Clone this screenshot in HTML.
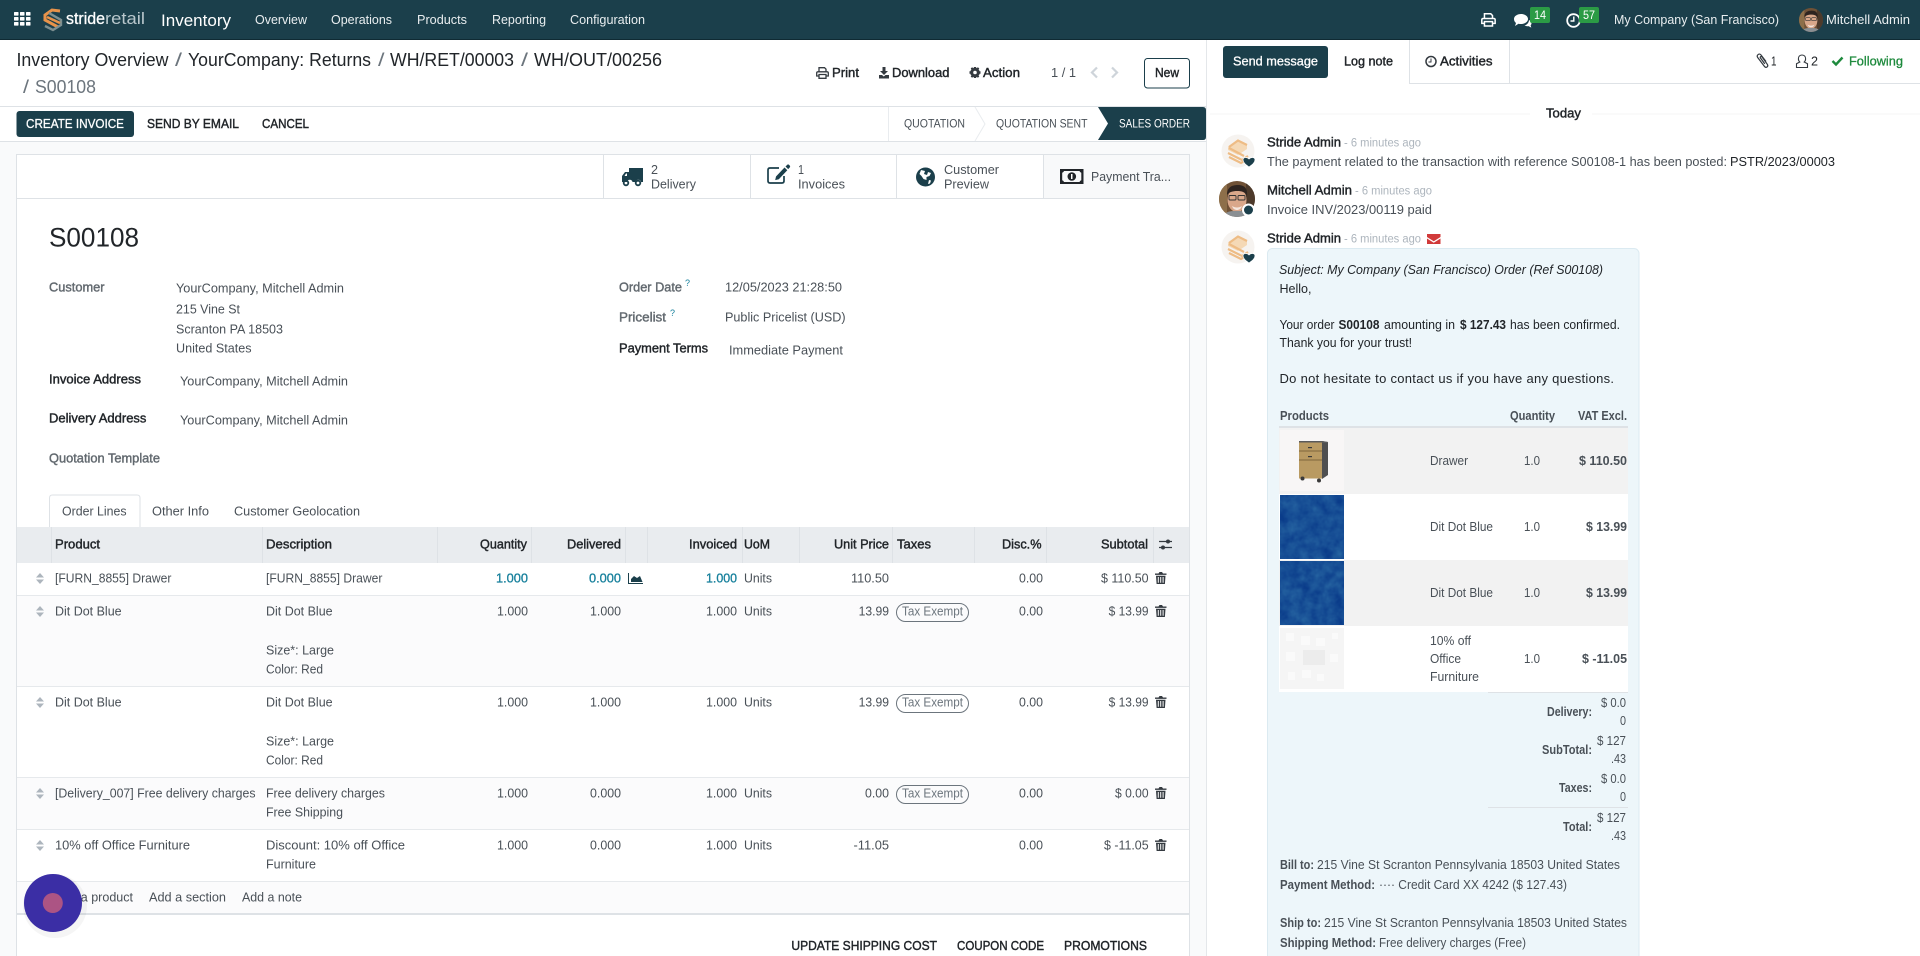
<!DOCTYPE html>
<html lang="en"><head><meta charset="utf-8"><title>S00108</title>
<style>
html,body{margin:0;padding:0;background:#fff;width:1920px;height:956px;overflow:hidden}
svg{display:block;font-family:"Liberation Sans",sans-serif;font-size:13px}
.d{fill:#212529}.g{fill:#495057}.l{fill:#6c757d}.w{fill:#fff}.s{fill:#adb5bd;font-size:11.5px}.t{fill:#17809c}
.dm{fill:#212529;stroke:#212529;stroke-width:.42}.gm{fill:#495057;stroke:#495057;stroke-width:.42}.lm{fill:#62696f;stroke:#62696f;stroke-width:.42}.wm{fill:#fff;stroke:#fff;stroke-width:.3}
.gb{fill:#495057;font-weight:bold}
.n{fill:#e9eef0}
.b{font-size:18.5px}.i{font-style:italic}
.tm{fill:#17809c;stroke:#17809c;stroke-width:.3}
</style></head><body>
<svg width="1920" height="956" viewBox="0 0 1920 956">
<defs>
<g id="handle"><path d="M0 4.500 4 0 8 4.500zM0 6.500h8L4 11z" fill="#adb5bd"/></g>
<g id="trash"><path d="M3.500 1.500 4.500 0h2.500l1 1.500h3.500v1.400H0V1.500zM1 3.700h9.500l-.6 8.300H1.600zM2.800 5v5.800h1V5zM5.200 5v5.800h1V5zM7.600 5v5.800h1V5z" fill="#343a40" fill-rule="evenodd"/></g>
<g id="pill"><rect x=".5" y=".5" width="72" height="18" rx="9" fill="none" stroke="#6c757d"/></g>
<g id="printer" fill="none" stroke="currentColor" stroke-width="1.300"><path d="M819 72v-4.300h5.500l1.500 1.500V72"/><path d="M819 76h-2.300v-3q0-1.200 1.200-1.200h9.200q1.200 0 1.200 1.200v3H826"/><path d="M819 74.500h7v3.800h-7z"/></g>
<clipPath id="cp1"><circle cx="18" cy="18" r="18"/></clipPath>
<g id="photo"><g clip-path="url(#cp1)"><rect width="36" height="36" fill="#6f5136"/><rect x="0" width="8" height="36" fill="#8d6f4a"/><rect x="27" width="9" height="36" fill="#4d3a2b"/><ellipse cx="18" cy="19" rx="9.500" ry="12" fill="#d9a78a"/><path d="M8 14C8 6 13 4 19 4s10 3 9 11c-2-4-5-5-10-5-4 0-8 1-10 4z" fill="#2e2420"/><rect x="10" y="14.500" width="7" height="4.500" rx="1" fill="none" stroke="#333" stroke-width=".9"/><rect x="19" y="14.500" width="7" height="4.500" rx="1" fill="none" stroke="#333" stroke-width=".9"/><path d="M13 25c3 2 7 2 10 0-1 3-3 4-5 4s-4-1-5-4z" fill="#fff" opacity=".7"/><path d="M4 36c2-6 8-6 14-6s12 0 14 6z" fill="#8a8f93"/></g></g>
<g id="stride"><circle cx="17" cy="16" r="16.500" fill="#f6f3f0"/><path d="M7 12l9-7 10 5v4l-9 6-10-5z" fill="#f5d9b6"/><g fill="none" stroke="#eebc85" stroke-width="2.200"><path d="M8 12l9-6.500 9 4.500"/><path d="M8 13l15 8"/><path d="M7 18l14 7 6-4"/><path d="M8 22l12 6 5-3"/></g><path d="M28 32c-3.500-2.500-6-4.500-6-7.200 0-2.500 3.800-3.300 6-.8 2.200-2.500 6-1.700 6 .8 0 2.700-2.500 4.700-6 7.200z" fill="#1b3f4b" stroke="#fff" stroke-width=".7"/></g>
<filter id="tex" x="0" y="0" width="100%" height="100%"><feTurbulence type="fractalNoise" baseFrequency=".09" numOctaves="3" seed="4"/><feColorMatrix values="0 0 0 0 0.02 0 0 0 0 0.13 0 0 0 0 0.36 1 1 0 0 -.55"/></filter>
</defs>

<!-- page backgrounds -->
<rect width="1920" height="956" fill="#fff"/>
<rect x="0" y="141" width="1206" height="815" fill="#f9fafb"/>
<rect x="1206" y="40" width="1" height="916" fill="#e4e7ea"/>

<!-- navbar -->
<rect width="1920" height="40" fill="#1b3f4b"/>
<rect y="39" width="1920" height="1" fill="#0f2a33"/>
<g fill="#fff"><rect x="14" y="12" width="4.500" height="3.600" rx=".6"/><rect x="20" y="12" width="4.500" height="3.600" rx=".6"/><rect x="26" y="12" width="4.500" height="3.600" rx=".6"/><rect x="14" y="17" width="4.500" height="3.600" rx=".6"/><rect x="20" y="17" width="4.500" height="3.600" rx=".6"/><rect x="26" y="17" width="4.500" height="3.600" rx=".6"/><rect x="14" y="22" width="4.500" height="3.600" rx=".6"/><rect x="20" y="22" width="4.500" height="3.600" rx=".6"/><rect x="26" y="22" width="4.500" height="3.600" rx=".6"/></g>
<g fill="none" stroke-width="3"><path d="M60 11 52 10 45 15v5l13 7" stroke="#e8934a"/><path d="M45 26 53 30 61 25v-5L49 13" stroke="#7d8f90" stroke-width="2.400"/><path d="M47 17l13 6" stroke="#e8934a" stroke-width="2.600"/></g>
<text x="66" y="24" font-size="17" textLength="39" lengthAdjust="spacingAndGlyphs" class="wm">stride</text>
<text x="105" y="24" font-size="17" textLength="40" lengthAdjust="spacingAndGlyphs" fill="#b9c7cc">retail</text>
<text x="161" y="26" font-size="16.500" textLength="70" lengthAdjust="spacingAndGlyphs" class="w">Inventory</text>
<text x="255" y="24" textLength="52" lengthAdjust="spacingAndGlyphs" class="n">Overview</text>
<text x="331" y="24" textLength="61" lengthAdjust="spacingAndGlyphs" class="n">Operations</text>
<text x="417" y="24" textLength="50" lengthAdjust="spacingAndGlyphs" class="n">Products</text>
<text x="492" y="24" textLength="54" lengthAdjust="spacingAndGlyphs" class="n">Reporting</text>
<text x="570" y="24" textLength="75" lengthAdjust="spacingAndGlyphs" class="n">Configuration</text>
<!-- navbar right icons -->
<use href="#printer" style="color:#fff" transform="translate(1481 13) scale(1.150) translate(-816 -67)"/>
<path d="M1521 14c3.800 0 7 2.200 7 5s-3.200 5-7 5c-.9 0-1.700-.1-2.500-.3L1515 26l1-3c-1.300-1-2-2.400-2-4 0-2.800 3.200-5 7-5z" fill="#fff"/>
<path d="M1529 20c1.600.7 2.500 1.900 2.500 3.200 0 .8-.3 1.500-.9 2.100l.7 2.300-2.800-1.500c-1.500.3-3-.1-4-.6 2.500-.6 4.500-3 4.500-5.500z" fill="#fff"/>
<rect x="1530" y="7" width="20" height="16" rx="2" fill="#2b9b45"/>
<text x="1534" y="19" font-size="12" textLength="12" lengthAdjust="spacingAndGlyphs" class="w">14</text>
<circle cx="1573.500" cy="20.500" r="6.300" fill="none" stroke="#fff" stroke-width="1.800"/><path d="M1573.800 16.500v4.500h-3.300" fill="none" stroke="#fff" stroke-width="1.400"/>
<rect x="1579" y="7" width="20" height="16" rx="2" fill="#2b9b45"/>
<text x="1583" y="19" font-size="12" textLength="12" lengthAdjust="spacingAndGlyphs" class="w">57</text>
<text x="1614" y="24" textLength="165" lengthAdjust="spacingAndGlyphs" class="n">My Company (San Francisco)</text>
<use href="#photo" transform="translate(1799 8) scale(.667)"/>
<text x="1826" y="24" textLength="84" lengthAdjust="spacingAndGlyphs" class="n">Mitchell Admin</text>

<!-- breadcrumb -->
<text x="16.500" y="66" textLength="152" lengthAdjust="spacingAndGlyphs" class="b d">Inventory Overview</text>
<text x="175" y="66" textLength="7" lengthAdjust="spacingAndGlyphs" class="b l">/</text>
<text x="188" y="66" textLength="183" lengthAdjust="spacingAndGlyphs" class="b d">YourCompany: Returns</text>
<text x="378" y="66" textLength="6.500" lengthAdjust="spacingAndGlyphs" class="b l">/</text>
<text x="390" y="66" textLength="124" lengthAdjust="spacingAndGlyphs" class="b d">WH/RET/00003</text>
<text x="521" y="66" textLength="7" lengthAdjust="spacingAndGlyphs" class="b l">/</text>
<text x="534" y="66" textLength="128" lengthAdjust="spacingAndGlyphs" class="b d">WH/OUT/00256</text>
<text x="23" y="93" textLength="6" lengthAdjust="spacingAndGlyphs" class="b l">/</text>
<text x="35" y="93" textLength="61" lengthAdjust="spacingAndGlyphs" class="b l">S00108</text>

<!-- control panel right -->
<use href="#printer" style="color:#343a40"/>
<text x="832" y="77" textLength="27" lengthAdjust="spacingAndGlyphs" class="dm">Print</text>
<path d="M882.500 67h3v4h2.500l-4 4-4-4h2.500zM879 75h3l1.800 1.500L885.500 75h3.500v3.500h-10z" fill="#343a40"/>
<text x="892" y="77" textLength="57.500" lengthAdjust="spacingAndGlyphs" class="dm">Download</text>
<circle cx="975" cy="72.500" r="4.800" fill="#343a40"/><path d="M973.800 67h2.400v1.500h-2.400zM973.800 76.500h2.400V78h-2.400zM969.500 71.300h1.500v2.400h-1.500zM979 71.300h1.500v2.400H979z" fill="#343a40"/><path d="M970.700 68.200l1.600-.9 1.300 1.600-1.600 1.300zM979.300 68.200l-1.600-.9-1.300 1.600 1.600 1.300zM970.700 76.800l1.600.9 1.300-1.600-1.600-1.300zM979.300 76.800l-1.600.9-1.300-1.600 1.600-1.300z" fill="#343a40"/><circle cx="975" cy="72.500" r="1.800" fill="#fff"/>
<text x="983" y="77" textLength="37" lengthAdjust="spacingAndGlyphs" class="dm">Action</text>
<text x="1051" y="77" textLength="25" lengthAdjust="spacingAndGlyphs" class="g">1 / 1</text>
<path d="M1097 67.500l-5 5 5 5M1112 67.500l5 5-5 5" fill="none" stroke="#ced4da" stroke-width="2.200"/>
<rect x="1144.500" y="58.500" width="45" height="29.500" rx="3" fill="#fff" stroke="#1b3f4b"/>
<text x="1155" y="77" textLength="24" lengthAdjust="spacingAndGlyphs" class="dm">New</text>

<!-- status row -->
<rect y="106" width="1206" height="1" fill="#dee2e6"/>
<rect y="141" width="1206" height="1" fill="#dee2e6"/>
<rect x="16.500" y="111" width="117.500" height="26" rx="3" fill="#1b3f4b"/>
<text x="26" y="128" textLength="98" lengthAdjust="spacingAndGlyphs" class="wm">CREATE INVOICE</text>
<text x="147" y="128" textLength="92" lengthAdjust="spacingAndGlyphs" class="dm">SEND BY EMAIL</text>
<text x="262" y="128" textLength="47" lengthAdjust="spacingAndGlyphs" class="dm">CANCEL</text>
<rect x="888" y="107" width="1" height="34" fill="#e9ecef"/>
<text x="904" y="127.500" font-size="12" textLength="61" lengthAdjust="spacingAndGlyphs" class="g">QUOTATION</text>
<path d="M975 107l10 17-10 17" fill="none" stroke="#e9ecef"/>
<text x="996" y="127.500" font-size="12" textLength="91.500" lengthAdjust="spacingAndGlyphs" class="g">QUOTATION SENT</text>
<path d="M1098 107h105q3 0 3 3v27q0 3-3 3h-105l10-16.500z" fill="#1b3f4b"/>
<text x="1119" y="127.500" font-size="12" textLength="71" lengthAdjust="spacingAndGlyphs" class="w">SALES ORDER</text>

<!-- sheet -->
<rect x="16.500" y="154.500" width="1173" height="810" fill="#fff" stroke="#dee2e6"/>
<rect x="17" y="198" width="1172" height="1" fill="#dee2e6"/>
<rect x="1043" y="155" width="146" height="43" fill="#f8f9fa"/>
<rect x="603" y="155" width="1" height="43" fill="#dee2e6"/><rect x="750" y="155" width="1" height="43" fill="#dee2e6"/><rect x="896" y="155" width="1" height="43" fill="#dee2e6"/><rect x="1043" y="155" width="1" height="43" fill="#dee2e6"/>
<!-- truck -->
<path d="M629 168h14v14h-2a2.800 2.800 0 0 0-5.500 0h-3a2.800 2.800 0 0 0-5.500 0H622v-6l3-4h4zm-2 5.500h-1l-1.500 2.500h2.500z" fill="#1b3f4b" fill-rule="evenodd"/>
<circle cx="626" cy="183" r="2.300" fill="none" stroke="#1b3f4b" stroke-width="1.800"/><circle cx="638" cy="183" r="2.300" fill="none" stroke="#1b3f4b" stroke-width="1.800"/>
<text x="651" y="174" textLength="7" lengthAdjust="spacingAndGlyphs" class="g">2</text>
<text x="651" y="188.500" textLength="45" lengthAdjust="spacingAndGlyphs" class="g">Delivery</text>
<!-- edit -->
<path d="M784 176v5q0 2-2 2h-12q-2 0-2-2v-11q0-2 2-2h9" fill="none" stroke="#1b3f4b" stroke-width="1.700"/>
<path d="M776 176.500l8.500-9 2.800 2.800-8.500 9-3.600.8zM785.500 166.500l1.800-1.800q.8-.6 1.600 0l1 1q.6.8 0 1.600l-1.700 1.800z" fill="#1b3f4b"/>
<text x="798" y="174" textLength="6" lengthAdjust="spacingAndGlyphs" class="g">1</text>
<text x="798" y="188.500" textLength="47" lengthAdjust="spacingAndGlyphs" class="g">Invoices</text>
<!-- globe -->
<circle cx="925.500" cy="177" r="9.500" fill="#1b3f4b"/>
<path d="M921 170l4 1-1 3 3 1 1-3 3 1-1.500 3-3 1v3l-3-1-2-3-2-2zM929 180l2 .5-1 3-2 .5z" fill="#fff"/>
<text x="944" y="174" textLength="55" lengthAdjust="spacingAndGlyphs" class="g">Customer</text>
<text x="944" y="188.500" textLength="45" lengthAdjust="spacingAndGlyphs" class="g">Preview</text>
<!-- money -->
<rect x="1060" y="169" width="23.500" height="15" fill="#212529"/>
<path d="M1064 171h15.500a2.500 2.500 0 0 0 1.800 1.800v7.400a2.500 2.500 0 0 0-1.800 1.800H1064a2.500 2.500 0 0 0-1.800-1.800v-7.400a2.500 2.500 0 0 0 1.800-1.800z" fill="#f8f9fa"/>
<circle cx="1071.800" cy="176.500" r="4.300" fill="#212529"/><rect x="1071" y="174" width="1.500" height="5" fill="#fff"/>
<text x="1091" y="181" textLength="80" lengthAdjust="spacingAndGlyphs" class="g">Payment Tra...</text>

<!-- form -->
<text x="49" y="246.700" font-size="27" textLength="90" lengthAdjust="spacingAndGlyphs" class="d">S00108</text>
<text x="49" y="291.700" textLength="55.500" lengthAdjust="spacingAndGlyphs" class="lm">Customer</text>
<text x="176" y="292.700" textLength="168" lengthAdjust="spacingAndGlyphs" class="g">YourCompany, Mitchell Admin</text>
<text x="176" y="313.700" textLength="64" lengthAdjust="spacingAndGlyphs" class="g">215 Vine St</text>
<text x="176" y="333.700" textLength="107" lengthAdjust="spacingAndGlyphs" class="g">Scranton PA 18503</text>
<text x="176" y="352.700" textLength="75.500" lengthAdjust="spacingAndGlyphs" class="g">United States</text>
<text x="49" y="383.700" textLength="92" lengthAdjust="spacingAndGlyphs" class="dm">Invoice Address</text>
<text x="180" y="385.700" textLength="168" lengthAdjust="spacingAndGlyphs" class="g">YourCompany, Mitchell Admin</text>
<text x="49" y="422.700" textLength="97.400" lengthAdjust="spacingAndGlyphs" class="dm">Delivery Address</text>
<text x="180" y="424.700" textLength="168" lengthAdjust="spacingAndGlyphs" class="g">YourCompany, Mitchell Admin</text>
<text x="49" y="462.700" textLength="111" lengthAdjust="spacingAndGlyphs" class="lm">Quotation Template</text>
<text x="619" y="291.700" textLength="63" lengthAdjust="spacingAndGlyphs" class="lm">Order Date</text>
<text x="685" y="286" font-size="9" class="t">?</text>
<text x="725" y="291.700" textLength="117" lengthAdjust="spacingAndGlyphs" class="g">12/05/2023 21:28:50</text>
<text x="619" y="321.700" textLength="47" lengthAdjust="spacingAndGlyphs" class="lm">Pricelist</text>
<text x="670" y="316" font-size="9" class="t">?</text>
<text x="725" y="321.700" textLength="120.600" lengthAdjust="spacingAndGlyphs" class="g">Public Pricelist (USD)</text>
<text x="619" y="352.700" textLength="89" lengthAdjust="spacingAndGlyphs" class="dm">Payment Terms</text>
<text x="729" y="354.700" textLength="114" lengthAdjust="spacingAndGlyphs" class="g">Immediate Payment</text>

<!-- tabs -->
<path d="M49.500 528v-30q0-3 3-3h84.500q3 0 3 3v30" fill="#fff" stroke="#dee2e6"/>
<text x="62" y="515.700" textLength="64.500" lengthAdjust="spacingAndGlyphs" class="g">Order Lines</text>
<text x="152" y="515.700" textLength="57" lengthAdjust="spacingAndGlyphs" class="g">Other Info</text>
<text x="234" y="515.700" textLength="126" lengthAdjust="spacingAndGlyphs" class="g">Customer Geolocation</text>

<!-- table header -->
<rect x="17" y="527" width="1172" height="36" fill="#e9ecef"/>
<g fill="#dee2e6"><rect x="51" y="527" width="1" height="36"/><rect x="262" y="527" width="1" height="36"/><rect x="437" y="527" width="1" height="36"/><rect x="531" y="527" width="1" height="36"/><rect x="625" y="527" width="1" height="36"/><rect x="647" y="527" width="1" height="36"/><rect x="742" y="527" width="1" height="36"/><rect x="799" y="527" width="1" height="36"/><rect x="892" y="527" width="1" height="36"/><rect x="974" y="527" width="1" height="36"/><rect x="1046" y="527" width="1" height="36"/><rect x="1153" y="527" width="1" height="36"/></g>
<text x="55" y="548.700" textLength="45" lengthAdjust="spacingAndGlyphs" class="dm">Product</text>
<text x="266" y="548.700" textLength="66" lengthAdjust="spacingAndGlyphs" class="dm">Description</text>
<text x="480" y="548.700" textLength="47" lengthAdjust="spacingAndGlyphs" class="dm">Quantity</text>
<text x="567" y="548.700" textLength="54" lengthAdjust="spacingAndGlyphs" class="dm">Delivered</text>
<text x="689" y="548.700" textLength="48" lengthAdjust="spacingAndGlyphs" class="dm">Invoiced</text>
<text x="744" y="548.700" textLength="26" lengthAdjust="spacingAndGlyphs" class="dm">UoM</text>
<text x="834" y="548.700" textLength="55" lengthAdjust="spacingAndGlyphs" class="dm">Unit Price</text>
<text x="897" y="548.700" textLength="34" lengthAdjust="spacingAndGlyphs" class="dm">Taxes</text>
<text x="1002" y="548.700" textLength="39.500" lengthAdjust="spacingAndGlyphs" class="dm">Disc.%</text>
<text x="1101" y="548.700" textLength="47" lengthAdjust="spacingAndGlyphs" class="dm">Subtotal</text>
<path d="M1159 541.500h13M1159 547.500h13" stroke="#343a40" stroke-width="1.300"/><circle cx="1168" cy="541.500" r="2" fill="#343a40"/><circle cx="1163" cy="547.500" r="2" fill="#343a40"/>

<!-- rows -->
<rect x="17" y="563" width="1172" height="32" fill="#fff"/>
<rect x="17" y="596" width="1172" height="90" fill="#fbfbfc"/>
<rect x="17" y="687" width="1172" height="90" fill="#fff"/>
<rect x="17" y="778" width="1172" height="51" fill="#fbfbfc"/>
<rect x="17" y="830" width="1172" height="51" fill="#fff"/>
<rect x="17" y="882" width="1172" height="31" fill="#fbfbfc"/>
<g fill="#e6e9ec"><rect x="17" y="595" width="1172" height="1"/><rect x="17" y="686" width="1172" height="1"/><rect x="17" y="777" width="1172" height="1"/><rect x="17" y="829" width="1172" height="1"/><rect x="17" y="881" width="1172" height="1"/></g>
<rect x="17" y="913" width="1172" height="2" fill="#dee2e6"/>

<!-- row 1 -->
<use href="#handle" x="36" y="573"/>
<text x="55" y="582.700" textLength="116.400" lengthAdjust="spacingAndGlyphs" class="g">[FURN_8855] Drawer</text>
<text x="266" y="582.700" textLength="116.400" lengthAdjust="spacingAndGlyphs" class="g">[FURN_8855] Drawer</text>
<text x="496" y="582.700" textLength="32" lengthAdjust="spacingAndGlyphs" class="tm">1.000</text>
<text x="589" y="582.700" textLength="32" lengthAdjust="spacingAndGlyphs" class="tm">0.000</text>
<path d="M629 573v10h14v1h-15v-11zM631 582v-3l3-3 3 2 3-2 2.500 6z" fill="#1b3f4b"/>
<text x="706" y="582.700" textLength="31" lengthAdjust="spacingAndGlyphs" class="tm">1.000</text>
<text x="744" y="582.700" textLength="28" lengthAdjust="spacingAndGlyphs" class="g">Units</text>
<text x="851" y="582.700" textLength="38" lengthAdjust="spacingAndGlyphs" class="g">110.50</text>
<text x="1019" y="582.700" textLength="24" lengthAdjust="spacingAndGlyphs" class="g">0.00</text>
<text x="1101" y="582.700" textLength="47.600" lengthAdjust="spacingAndGlyphs" class="g">$ 110.50</text>
<use href="#trash" x="1155" y="572"/>

<!-- row 2 -->
<use href="#handle" x="36" y="606"/>
<text x="55" y="615.700" textLength="66.600" lengthAdjust="spacingAndGlyphs" class="g">Dit Dot Blue</text>
<text x="266" y="615.700" textLength="66.600" lengthAdjust="spacingAndGlyphs" class="g">Dit Dot Blue</text>
<text x="266" y="654.700" textLength="68" lengthAdjust="spacingAndGlyphs" class="g">Size*: Large</text>
<text x="266" y="673.700" textLength="57" lengthAdjust="spacingAndGlyphs" class="g">Color: Red</text>
<text x="497" y="615.700" textLength="31" lengthAdjust="spacingAndGlyphs" class="g">1.000</text>
<text x="590" y="615.700" textLength="31" lengthAdjust="spacingAndGlyphs" class="g">1.000</text>
<text x="706" y="615.700" textLength="31" lengthAdjust="spacingAndGlyphs" class="g">1.000</text>
<text x="744" y="615.700" textLength="28" lengthAdjust="spacingAndGlyphs" class="g">Units</text>
<text x="858.600" y="615.700" textLength="30.400" lengthAdjust="spacingAndGlyphs" class="g">13.99</text>
<use href="#pill" x="896" y="603"/>
<text x="902" y="615.700" textLength="61" lengthAdjust="spacingAndGlyphs" class="l">Tax Exempt</text>
<text x="1019" y="615.700" textLength="24" lengthAdjust="spacingAndGlyphs" class="g">0.00</text>
<text x="1108.600" y="615.700" textLength="40" lengthAdjust="spacingAndGlyphs" class="g">$ 13.99</text>
<use href="#trash" x="1155" y="605"/>

<!-- row 3 -->
<use href="#handle" x="36" y="697"/>
<text x="55" y="706.700" textLength="66.600" lengthAdjust="spacingAndGlyphs" class="g">Dit Dot Blue</text>
<text x="266" y="706.700" textLength="66.600" lengthAdjust="spacingAndGlyphs" class="g">Dit Dot Blue</text>
<text x="266" y="745.700" textLength="68" lengthAdjust="spacingAndGlyphs" class="g">Size*: Large</text>
<text x="266" y="764.300" textLength="57" lengthAdjust="spacingAndGlyphs" class="g">Color: Red</text>
<text x="497" y="706.700" textLength="31" lengthAdjust="spacingAndGlyphs" class="g">1.000</text>
<text x="590" y="706.700" textLength="31" lengthAdjust="spacingAndGlyphs" class="g">1.000</text>
<text x="706" y="706.700" textLength="31" lengthAdjust="spacingAndGlyphs" class="g">1.000</text>
<text x="744" y="706.700" textLength="28" lengthAdjust="spacingAndGlyphs" class="g">Units</text>
<text x="858.600" y="706.700" textLength="30.400" lengthAdjust="spacingAndGlyphs" class="g">13.99</text>
<use href="#pill" x="896" y="694"/>
<text x="902" y="706.700" textLength="61" lengthAdjust="spacingAndGlyphs" class="l">Tax Exempt</text>
<text x="1019" y="706.700" textLength="24" lengthAdjust="spacingAndGlyphs" class="g">0.00</text>
<text x="1108.600" y="706.700" textLength="40" lengthAdjust="spacingAndGlyphs" class="g">$ 13.99</text>
<use href="#trash" x="1155" y="696"/>

<!-- row 4 -->
<use href="#handle" x="36" y="788"/>
<text x="55" y="797.700" textLength="200.500" lengthAdjust="spacingAndGlyphs" class="g">[Delivery_007] Free delivery charges</text>
<text x="266" y="797.700" textLength="119" lengthAdjust="spacingAndGlyphs" class="g">Free delivery charges</text>
<text x="266" y="816.700" textLength="77" lengthAdjust="spacingAndGlyphs" class="g">Free Shipping</text>
<text x="497" y="797.700" textLength="31" lengthAdjust="spacingAndGlyphs" class="g">1.000</text>
<text x="590" y="797.700" textLength="31" lengthAdjust="spacingAndGlyphs" class="g">0.000</text>
<text x="706" y="797.700" textLength="31" lengthAdjust="spacingAndGlyphs" class="g">1.000</text>
<text x="744" y="797.700" textLength="28" lengthAdjust="spacingAndGlyphs" class="g">Units</text>
<text x="865" y="797.700" textLength="24" lengthAdjust="spacingAndGlyphs" class="g">0.00</text>
<use href="#pill" x="896" y="785"/>
<text x="902" y="797.700" textLength="61" lengthAdjust="spacingAndGlyphs" class="l">Tax Exempt</text>
<text x="1019" y="797.700" textLength="24" lengthAdjust="spacingAndGlyphs" class="g">0.00</text>
<text x="1115" y="797.700" textLength="33.600" lengthAdjust="spacingAndGlyphs" class="g">$ 0.00</text>
<use href="#trash" x="1155" y="787"/>

<!-- row 5 -->
<use href="#handle" x="36" y="840"/>
<text x="55" y="849.700" textLength="135" lengthAdjust="spacingAndGlyphs" class="g">10% off Office Furniture</text>
<text x="266" y="849.700" textLength="139" lengthAdjust="spacingAndGlyphs" class="g">Discount: 10% off Office</text>
<text x="266" y="868.300" textLength="50" lengthAdjust="spacingAndGlyphs" class="g">Furniture</text>
<text x="497" y="849.700" textLength="31" lengthAdjust="spacingAndGlyphs" class="g">1.000</text>
<text x="590" y="849.700" textLength="31" lengthAdjust="spacingAndGlyphs" class="g">0.000</text>
<text x="706" y="849.700" textLength="31" lengthAdjust="spacingAndGlyphs" class="g">1.000</text>
<text x="744" y="849.700" textLength="28" lengthAdjust="spacingAndGlyphs" class="g">Units</text>
<text x="853.500" y="849.700" textLength="35.500" lengthAdjust="spacingAndGlyphs" class="g">-11.05</text>
<text x="1019" y="849.700" textLength="24" lengthAdjust="spacingAndGlyphs" class="g">0.00</text>
<text x="1104" y="849.700" textLength="44.600" lengthAdjust="spacingAndGlyphs" class="g">$ -11.05</text>
<use href="#trash" x="1155" y="839"/>

<!-- add row -->
<text x="55" y="901.700" textLength="78" lengthAdjust="spacingAndGlyphs" class="g">Add a product</text>
<text x="149" y="901.700" textLength="77" lengthAdjust="spacingAndGlyphs" class="g">Add a section</text>
<text x="242" y="901.700" textLength="60" lengthAdjust="spacingAndGlyphs" class="g">Add a note</text>
<text x="791.400" y="950" textLength="145.600" lengthAdjust="spacingAndGlyphs" class="dm">UPDATE SHIPPING COST</text>
<text x="957" y="950" textLength="87" lengthAdjust="spacingAndGlyphs" class="dm">COUPON CODE</text>
<text x="1064" y="950" textLength="83" lengthAdjust="spacingAndGlyphs" class="dm">PROMOTIONS</text>

<!-- floating circle -->
<circle cx="55" cy="906" r="32" fill="#000" opacity=".04"/>
<circle cx="53" cy="903" r="29" fill="#3b2ea5"/>
<circle cx="52.800" cy="903" r="10" fill="#ac5484"/>

<!-- chatter top -->
<rect x="1223" y="46" width="105" height="32" rx="3" fill="#1b3f4b"/>
<text x="1233" y="65.700" textLength="85" lengthAdjust="spacingAndGlyphs" class="wm">Send message</text>
<text x="1344" y="65.700" textLength="49" lengthAdjust="spacingAndGlyphs" class="dm">Log note</text>
<rect x="1409" y="40" width="1" height="43" fill="#dee2e6"/><rect x="1509" y="40" width="1" height="43" fill="#dee2e6"/>
<rect x="1409" y="83" width="511" height="1" fill="#dee2e6"/>
<circle cx="1431" cy="61.500" r="5" fill="none" stroke="#343a40" stroke-width="1.500"/><path d="M1431 58.500v3.500h-2.500" fill="none" stroke="#343a40"/>
<text x="1440" y="65.700" textLength="52.500" lengthAdjust="spacingAndGlyphs" class="dm">Activities</text>
<path d="M1766 61.500l-5-6.500c-1.700-2.200-4.900.2-3.300 2.500l6.800 9c1.500 1.900 4.200 0 2.900-2.100l-5.400-7.500c-.8-1-2.300 0-1.600 1l4.400 6" fill="none" stroke="#343a40" stroke-width="1.200"/>
<text x="1771" y="65.700" textLength="5.500" lengthAdjust="spacingAndGlyphs" class="d">1</text>
<path d="M1802 55c2.400 0 3.600 1.700 3.600 3.900 0 1.400-.6 2.400-1.400 3.100l3.300 1.700v3.800h-11v-3.800l3.300-1.700c-.8-.7-1.400-1.700-1.400-3.100 0-2.200 1.200-3.900 3.600-3.900z" fill="none" stroke="#343a40" stroke-width="1.100"/>
<text x="1811" y="65.700" textLength="7" lengthAdjust="spacingAndGlyphs" class="d">2</text>
<path d="M1832.500 61l3.500 3.500 6.500-7" fill="none" stroke="#1e8a3d" stroke-width="2.400"/>
<text x="1849" y="65.700" textLength="54" lengthAdjust="spacingAndGlyphs" fill="#1e8a3d" stroke="#1e8a3d" stroke-width=".3">Following</text>

<!-- today -->
<rect x="1210" y="113.500" width="320" height="1" fill="#f4f5f6"/><rect x="1592" y="113.500" width="328" height="1" fill="#f4f5f6"/>
<text x="1546" y="117.600" textLength="35" lengthAdjust="spacingAndGlyphs" class="dm">Today</text>

<!-- messages -->
<use href="#stride" x="1221" y="135"/>
<text x="1267" y="146.700" textLength="74" lengthAdjust="spacingAndGlyphs" class="dm">Stride Admin</text>
<text x="1344" y="146.700" textLength="77" lengthAdjust="spacingAndGlyphs" class="s">- 6 minutes ago</text>
<text x="1267" y="166" textLength="460" lengthAdjust="spacingAndGlyphs" class="g">The payment related to the transaction with reference S00108-1 has been posted:</text>
<text x="1730" y="166" textLength="105" lengthAdjust="spacingAndGlyphs" class="d">PSTR/2023/00003</text>

<use href="#photo" x="1219" y="181"/>
<circle cx="1248.500" cy="210" r="6.500" fill="#fff"/><circle cx="1248.500" cy="210" r="4.500" fill="#1b3f4b"/>
<text x="1267" y="194.700" textLength="85" lengthAdjust="spacingAndGlyphs" class="dm">Mitchell Admin</text>
<text x="1355" y="194.700" textLength="77" lengthAdjust="spacingAndGlyphs" class="s">- 6 minutes ago</text>
<text x="1267" y="214" textLength="165" lengthAdjust="spacingAndGlyphs" class="g">Invoice INV/2023/00119 paid</text>

<use href="#stride" x="1221" y="231"/>
<text x="1267" y="242.700" textLength="74" lengthAdjust="spacingAndGlyphs" class="dm">Stride Admin</text>
<text x="1344" y="242.700" textLength="77" lengthAdjust="spacingAndGlyphs" class="s">- 6 minutes ago</text>
<path d="M1427 234h13.500v3l-6.750 4.300L1427 237zM1427 238.500l6.750 4.300 6.750-4.300v5.500H1427z" fill="#d13a3a"/>

<!-- bubble -->
<rect x="1267.500" y="248.500" width="371.500" height="720" rx="5" fill="#edf6fa" stroke="#dbeaf1"/>
<text x="1279" y="274" textLength="324" lengthAdjust="spacingAndGlyphs" class="d i">Subject: My Company (San Francisco) Order (Ref S00108)</text>
<text x="1279.500" y="293" textLength="32" lengthAdjust="spacingAndGlyphs" class="d">Hello,</text>
<text x="1279.500" y="329" textLength="55" lengthAdjust="spacingAndGlyphs" class="d">Your order</text>
<text x="1338.500" y="329" textLength="41" lengthAdjust="spacingAndGlyphs" class="d" font-weight="bold">S00108</text>
<text x="1384" y="329" textLength="71" lengthAdjust="spacingAndGlyphs" class="d">amounting in</text>
<text x="1460" y="329" textLength="46" lengthAdjust="spacingAndGlyphs" class="d" font-weight="bold">$ 127.43</text>
<text x="1510" y="329" textLength="110" lengthAdjust="spacingAndGlyphs" class="d">has been confirmed.</text>
<text x="1279.500" y="347" textLength="132.500" lengthAdjust="spacingAndGlyphs" class="d">Thank you for your trust!</text>
<text x="1279.500" y="383" textLength="334.500" lengthAdjust="spacing" class="d">Do not hesitate to contact us if you have any questions.</text>

<text x="1280" y="420" textLength="49" lengthAdjust="spacingAndGlyphs" class="gb">Products</text>
<text x="1510" y="420" textLength="45" lengthAdjust="spacingAndGlyphs" class="gb">Quantity</text>
<text x="1578" y="420" textLength="49" lengthAdjust="spacingAndGlyphs" class="gb">VAT Excl.</text>
<rect x="1279" y="426" width="349" height="2" fill="#dee2e6"/>
<rect x="1279" y="428" width="349" height="66" fill="#f2f2f2"/>
<rect x="1279" y="494" width="349" height="66" fill="#fff"/>
<rect x="1279" y="560" width="349" height="66" fill="#f2f2f2"/>
<rect x="1279" y="626" width="349" height="66" fill="#fff"/>

<!-- images -->
<rect x="1280" y="430" width="64" height="61" fill="#f8f6f6"/>
<path d="M1322 441l6 1v33l-6 4z" fill="#4f4f50"/>
<path d="M1299 441l23 0 6 1v1l-29 0z" fill="#5a5a5a"/>
<rect x="1299" y="442.500" width="23" height="36" fill="#b99a62"/>
<g stroke="#6b5430" stroke-width=".8"><path d="M1299 451h23M1299 460h23"/></g>
<g fill="#3a3a3a"><rect x="1308" y="447" width="4" height="1.200"/><rect x="1308" y="456" width="4" height="1.200"/><circle cx="1302.500" cy="478.500" r="2"/><circle cx="1319" cy="480.500" r="2"/></g>
<rect x="1280" y="495" width="64" height="64" fill="#0a3c8a"/><rect x="1280" y="495" width="64" height="64" filter="url(#tex)"/>
<rect x="1280" y="561" width="64" height="64" fill="#0a3c8a"/><rect x="1280" y="561" width="64" height="64" filter="url(#tex)"/>
<rect x="1280" y="628" width="64" height="61" fill="#f5f5f5"/>
<g fill="#fafafa"><rect x="1286" y="633" width="8" height="8"/><rect x="1301" y="636" width="9" height="9"/><rect x="1316" y="638" width="9" height="8"/><rect x="1332" y="633" width="6" height="6"/><rect x="1286" y="652" width="9" height="9"/><rect x="1330" y="654" width="8" height="8"/><rect x="1288" y="672" width="7" height="8"/><rect x="1302" y="670" width="9" height="8"/><rect x="1317" y="674" width="7" height="7"/></g>
<rect x="1303" y="650" width="22" height="15" fill="#ececec"/>

<!-- table text -->
<text x="1430" y="465" textLength="38" lengthAdjust="spacingAndGlyphs" class="g">Drawer</text>
<text x="1524" y="465" textLength="16" lengthAdjust="spacingAndGlyphs" class="g">1.0</text>
<text x="1579" y="465" textLength="48" lengthAdjust="spacingAndGlyphs" class="gb">$ 110.50</text>
<text x="1430" y="531" textLength="63" lengthAdjust="spacingAndGlyphs" class="g">Dit Dot Blue</text>
<text x="1524" y="531" textLength="16" lengthAdjust="spacingAndGlyphs" class="g">1.0</text>
<text x="1586" y="531" textLength="41" lengthAdjust="spacingAndGlyphs" class="gb">$ 13.99</text>
<text x="1430" y="597" textLength="63" lengthAdjust="spacingAndGlyphs" class="g">Dit Dot Blue</text>
<text x="1524" y="597" textLength="16" lengthAdjust="spacingAndGlyphs" class="g">1.0</text>
<text x="1586" y="597" textLength="41" lengthAdjust="spacingAndGlyphs" class="gb">$ 13.99</text>
<text x="1430" y="645" textLength="41" lengthAdjust="spacingAndGlyphs" class="g">10% off</text>
<text x="1430" y="663" textLength="31" lengthAdjust="spacingAndGlyphs" class="g">Office</text>
<text x="1430" y="681" textLength="49" lengthAdjust="spacingAndGlyphs" class="g">Furniture</text>
<text x="1524" y="663" textLength="16" lengthAdjust="spacingAndGlyphs" class="g">1.0</text>
<text x="1582" y="663" textLength="45" lengthAdjust="spacingAndGlyphs" class="gb">$ -11.05</text>

<!-- totals -->
<rect x="1488" y="692" width="140" height="1" fill="#dee2e6"/>
<text x="1547" y="716" textLength="45" lengthAdjust="spacingAndGlyphs" class="gb">Delivery:</text>
<text x="1601" y="707" textLength="25" lengthAdjust="spacingAndGlyphs" class="g">$ 0.0</text>
<text x="1620" y="725" textLength="6" lengthAdjust="spacingAndGlyphs" class="g">0</text>
<text x="1542" y="754" textLength="50" lengthAdjust="spacingAndGlyphs" class="gb">SubTotal:</text>
<text x="1597" y="745" textLength="29" lengthAdjust="spacingAndGlyphs" class="g">$ 127</text>
<text x="1611" y="763" textLength="15" lengthAdjust="spacingAndGlyphs" class="g">.43</text>
<text x="1559" y="792" textLength="33" lengthAdjust="spacingAndGlyphs" class="gb">Taxes:</text>
<text x="1601" y="783" textLength="25" lengthAdjust="spacingAndGlyphs" class="g">$ 0.0</text>
<text x="1620" y="801" textLength="6" lengthAdjust="spacingAndGlyphs" class="g">0</text>
<rect x="1488" y="807" width="140" height="1" fill="#dee2e6"/>
<text x="1563" y="831" textLength="29" lengthAdjust="spacingAndGlyphs" class="gb">Total:</text>
<text x="1597" y="822" textLength="29" lengthAdjust="spacingAndGlyphs" class="g">$ 127</text>
<text x="1611" y="840" textLength="15" lengthAdjust="spacingAndGlyphs" class="g">.43</text>

<text x="1280" y="869" textLength="34" lengthAdjust="spacingAndGlyphs" class="gb">Bill to:</text>
<text x="1317" y="869" textLength="303" lengthAdjust="spacingAndGlyphs" class="g">215 Vine St Scranton Pennsylvania 18503 United States</text>
<text x="1280" y="889" textLength="95" lengthAdjust="spacingAndGlyphs" class="gb">Payment Method:</text>
<text x="1379" y="889" textLength="188" lengthAdjust="spacingAndGlyphs" class="g">···· Credit Card XX 4242 ($ 127.43)</text>
<text x="1280" y="927" textLength="41" lengthAdjust="spacingAndGlyphs" class="gb">Ship to:</text>
<text x="1324" y="927" textLength="303" lengthAdjust="spacingAndGlyphs" class="g">215 Vine St Scranton Pennsylvania 18503 United States</text>
<text x="1280" y="947" textLength="96" lengthAdjust="spacingAndGlyphs" class="gb">Shipping Method:</text>
<text x="1379" y="947" textLength="147" lengthAdjust="spacingAndGlyphs" class="g">Free delivery charges (Free)</text>
</svg>
</body></html>
